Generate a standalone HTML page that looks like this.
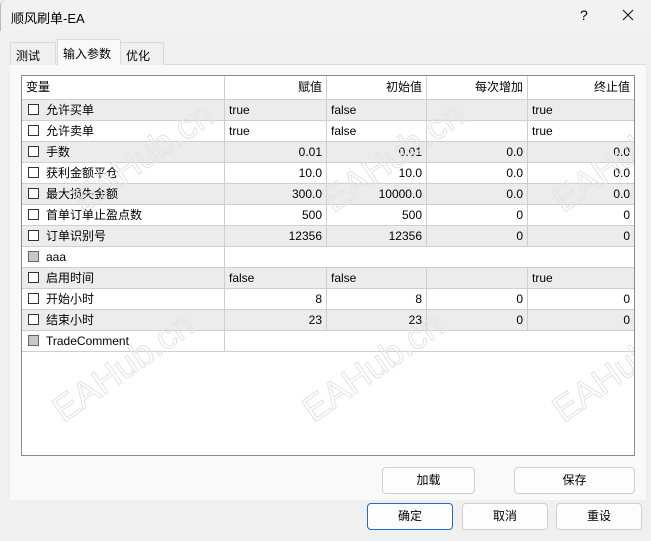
<!DOCTYPE html><html><head><meta charset="utf-8"><style>
*{margin:0;padding:0;box-sizing:border-box}
body{width:651px;height:541px;overflow:hidden;background:#f0f0f0;font-family:"Liberation Sans","Noto Sans CJK SC",sans-serif;font-size:12px;color:#000;position:relative}
.title{position:absolute;left:0;top:0;width:651px;height:31px;background:#f3f2f3;border-left:1px solid #bbb;border-top-left-radius:6px}
.title span{position:absolute;left:10px;top:8px;font-size:13px}
.tq{position:absolute;left:579px;top:7px;font-size:14px}
.tx{position:absolute;left:621px;top:9px}
.panel{position:absolute;left:10px;top:64px;width:636px;height:436px;background:#f9f9f9;border-top:1px solid #ddd}
.tab{position:absolute;top:42px;height:23px;border:1px solid #d9d9d9;border-bottom:none;background:#f0f0f0;padding:4px 5px;font-size:12px}
.tab.sel{top:39px;height:26px;background:#f9f9f9;padding-top:5px}
.tbl{position:absolute;left:21px;top:75px;width:614px;height:381px;border:1px solid #8a8a8a;background:#fff;overflow:hidden}
.r{position:absolute;left:0;width:612px;height:21px;border-bottom:1px solid #cfcfcf}
.r.g{background:#ececec}
.c{position:absolute;top:0;height:20px;border-right:1px solid #cfcfcf;line-height:20px;padding:0 4px;white-space:nowrap}
.rt{text-align:right}
.cb{display:inline-block;width:11px;height:11px;border:1px solid #333;background:#fff;vertical-align:-1px;margin-right:7px;margin-left:2px}
.cb.d{background:#c8c8c8;border-color:#666}
.btn{position:absolute;height:27px;border:1px solid #d0d0d0;border-radius:4px;background:#fdfdfd;text-align:center;line-height:25px;font-size:12px}
.wm{position:absolute;color:rgba(0,0,0,0);-webkit-text-stroke:1px #e3e3e3;font-size:36px;transform:rotate(-35deg);font-family:"Liberation Sans",sans-serif;white-space:nowrap}
</style></head><body>
<div class="title"><span>顺风刷单-EA</span><div class="tq">?</div><svg class="tx" width="12" height="12" viewBox="0 0 12 12"><path d="M1 1L11 11M11 1L1 11" stroke="#222" stroke-width="1.2" fill="none"/></svg></div>
<div class="panel"></div>
<div class="tab" style="left:10px;width:46px">测试</div>
<div class="tab" style="left:120px;width:44px">优化</div>
<div class="tab sel" style="left:57px;width:64px">输入参数</div>
<div class="tbl">
<div class="r" style="top:0;height:24px;border-bottom:1px solid #cfcfcf"><div class="c" style="left:0;width:203px;height:23px;line-height:23px">变量</div><div class="c rt" style="left:203px;width:102px;height:23px;line-height:23px">赋值</div><div class="c rt" style="left:305px;width:100px;height:23px;line-height:23px">初始值</div><div class="c rt" style="left:405px;width:101px;height:23px;line-height:23px">每次增加</div><div class="c rt" style="left:506px;width:106px;height:23px;line-height:23px;border-right:none">终止值</div></div>
<div id="rows"></div>
<div class="wm" style="left:40px;top:60px">EAHub.cn</div>
<div class="wm" style="left:290px;top:60px">EAHub.cn</div>
<div class="wm" style="left:520px;top:60px">EAHub.cn</div>
<div class="wm" style="left:20px;top:270px">EAHub.cn</div>
<div class="wm" style="left:270px;top:270px">EAHub.cn</div>
<div class="wm" style="left:520px;top:270px">EAHub.cn</div>
</div>
<script>
var d=[["允许买单","true","false","","true",0],["允许卖单","true","false","","true",0],["手数","0.01","0.01","0.0","0.0",1],["获利金额平仓","10.0","10.0","0.0","0.0",1],["最大损失金额","300.0","10000.0","0.0","0.0",1],["首单订单止盈点数","500","500","0","0",1],["订单识别号","12356","12356","0","0",1],["aaa",null],["启用时间","false","false","","true",0],["开始小时","8","8","0","0",1],["结束小时","23","23","0","0",1],["TradeComment",null]];
var h="";d.forEach(function(r,i){var t=24+i*21;h+='<div class="r'+(i%2==0?' g':'')+'" style="top:'+t+'px">';
h+='<div class="c" style="left:0;width:203px"><span class="cb'+(r[1]===null?' d':'')+'"></span>'+r[0]+'</div>';
if(r[1]===null){h+='<div class="c" style="left:203px;width:409px;border-right:none;background:#fff"></div>';}
else{var cl=r[5]?' rt':'';h+='<div class="c'+cl+'" style="left:203px;width:102px">'+r[1]+'</div><div class="c'+cl+'" style="left:305px;width:100px">'+r[2]+'</div><div class="c'+cl+'" style="left:405px;width:101px">'+r[3]+'</div><div class="c'+cl+'" style="left:506px;width:106px;border-right:none">'+r[4]+'</div>';}
h+='</div>';});document.getElementById('rows').outerHTML=h;
</script>
<div class="btn" style="left:382px;top:467px;width:93px">加载</div>
<div class="btn" style="left:514px;top:467px;width:121px">保存</div>
<div class="btn" style="left:367px;top:503px;width:86px;border-color:#1a6fc4">确定</div>
<div class="btn" style="left:462px;top:503px;width:86px">取消</div>
<div class="btn" style="left:556px;top:503px;width:86px">重设</div>
</body></html>
